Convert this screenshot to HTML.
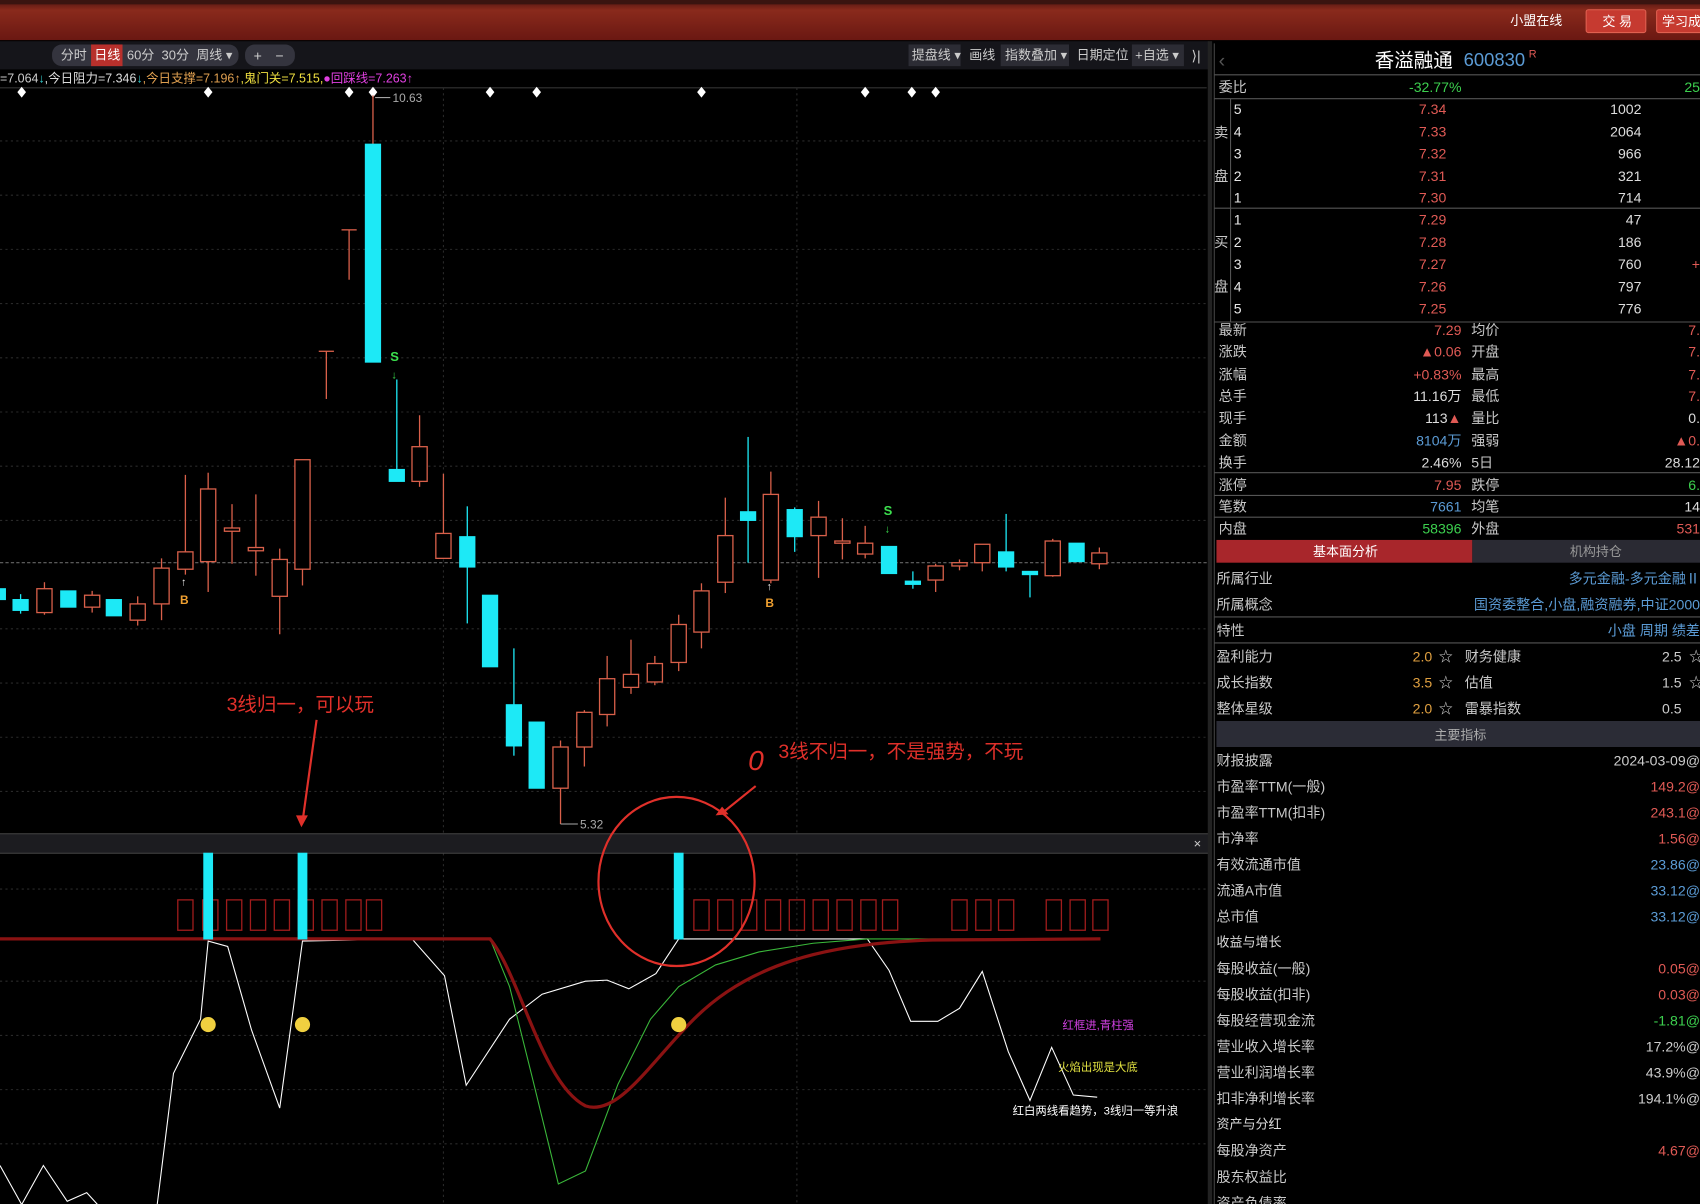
<!DOCTYPE html>
<html><head><meta charset="utf-8"><style>
html,body{margin:0;padding:0;background:#000;width:1700px;height:1204px;overflow:hidden}
svg{display:block}
text{font-family:"Liberation Sans","Noto Sans CJK SC",sans-serif}
.r{stroke:#d9604a;fill:#000;stroke-width:1.2}
.rw{stroke:#d9604a;stroke-width:1.2}
.c{fill:#1de9f6;stroke:#1de9f6;stroke-width:1}
.cw{stroke:#1de9f6;stroke-width:1.2}
.lb{fill:#c8c8c8;font-size:13px}
.rd{fill:#e05a55}.gr{fill:#3ccf4e}.bl{fill:#5b9bd5}.wh{fill:#e8e8e8}.or{fill:#e0a040}
.tofu{fill:none;stroke:#a01c1c;stroke-width:1.2}
</style></head><body>
<svg width="1700" height="1204" viewBox="0 0 1568 1110.5" preserveAspectRatio="none">
<defs><linearGradient id="hd" x1="0" y1="0" x2="0" y2="1"><stop offset="0" stop-color="#4a1410"/><stop offset="0.25" stop-color="#8a2a1c"/><stop offset="1" stop-color="#6a1812"/></linearGradient></defs>
<!-- header -->
<rect x="0" y="0" width="1568" height="37" fill="url(#hd)"/>
<rect x="0" y="0" width="1568" height="4" fill="#3a1410"/>
<text x="1393" y="23" font-size="12" fill="#fff">小盟在线</text>
<rect x="1463" y="9" width="55" height="21" rx="2" fill="#c63a30" stroke="#e06050"/>
<text x="1478" y="24" font-size="12" fill="#fff">交 易</text>
<rect x="1528" y="9" width="45" height="21" rx="2" fill="#c63a30" stroke="#e06050"/>
<text x="1533" y="24" font-size="12" fill="#fff">学习成</text>
<!-- toolbar -->
<rect x="0" y="38" width="1115" height="26" fill="#15151a"/>
<rect x="48" y="41" width="172" height="20" rx="9" fill="#34343e"/>
<rect x="84" y="41" width="29" height="20" fill="#b8302c"/>
<text x="56" y="55" font-size="12" fill="#ccc">分时</text><text x="87" y="55" font-size="12" fill="#fff">日线</text>
<text x="117" y="55" font-size="12" fill="#ccc">60分</text><text x="149" y="55" font-size="12" fill="#ccc">30分</text><text x="181" y="55" font-size="12" fill="#ccc">周线 ▾</text>
<rect x="226" y="41" width="46" height="20" rx="9" fill="#34343e"/>
<text x="234" y="56" font-size="13" fill="#ccc">+</text><text x="254" y="56" font-size="13" fill="#ccc">−</text>
<rect x="838" y="41" width="48" height="20" fill="#2c2c34"/><text x="841" y="55" font-size="12" fill="#ccc">提盘线 ▾</text>
<text x="894" y="55" font-size="12" fill="#ccc">画线</text>
<rect x="923" y="41" width="63" height="20" fill="#2c2c34"/><text x="927" y="55" font-size="12" fill="#ccc">指数叠加 ▾</text>
<text x="993" y="55" font-size="12" fill="#ccc">日期定位</text>
<rect x="1044" y="41" width="48" height="20" fill="#2c2c34"/><text x="1047" y="55" font-size="12" fill="#ccc">+自选 ▾</text>
<text x="1099" y="56" font-size="13" fill="#ccc">⟩|</text>
<!-- info line -->
<text x="0" y="76" font-size="11.5"><tspan fill="#ccc">=7.064</tspan><tspan fill="#3cc">↓</tspan><tspan fill="#ddd">,今日阻力=7.346</tspan><tspan fill="#3cc">↓</tspan><tspan fill="#e0a050">,今日支撑=7.196↑</tspan><tspan fill="#f0e040">,鬼门关=7.515,</tspan><tspan fill="#e040e0">●回踩线=7.263↑</tspan></text>
<line x1="0" y1="81" x2="1113" y2="81" stroke="#333"/>
<!-- grid -->
<g stroke="#2a2a2a" stroke-dasharray="2,3">
<line x1="0" y1="130" x2="1113" y2="130"/><line x1="0" y1="180" x2="1113" y2="180"/><line x1="0" y1="230" x2="1113" y2="230"/><line x1="0" y1="280" x2="1113" y2="280"/><line x1="0" y1="330" x2="1113" y2="330"/><line x1="0" y1="380" x2="1113" y2="380"/><line x1="0" y1="430" x2="1113" y2="430"/><line x1="0" y1="480" x2="1113" y2="480"/><line x1="0" y1="580" x2="1113" y2="580"/><line x1="0" y1="630" x2="1113" y2="630"/><line x1="0" y1="680" x2="1113" y2="680"/><line x1="0" y1="730" x2="1113" y2="730"/>
<line x1="409" y1="81" x2="409" y2="768"/><line x1="735" y1="81" x2="735" y2="768"/>
<line x1="0" y1="820" x2="1113" y2="820"/><line x1="0" y1="905" x2="1113" y2="905"/><line x1="0" y1="955" x2="1113" y2="955"/><line x1="0" y1="1005" x2="1113" y2="1005"/><line x1="0" y1="1055" x2="1113" y2="1055"/>
<line x1="409" y1="787" x2="409" y2="1110"/><line x1="735" y1="787" x2="735" y2="1110"/>
</g>
<line x1="0" y1="519" x2="1113" y2="519" stroke="#666" stroke-dasharray="3,2"/>
<!-- diamonds -->
<g fill="#fff">
<path d="M20 80l4 5-4 5-4-5z"/><path d="M192 80l4 5-4 5-4-5z"/><path d="M322 80l4 5-4 5-4-5z"/><path d="M344 80l4 5-4 5-4-5z"/><path d="M452 80l4 5-4 5-4-5z"/><path d="M495 80l4 5-4 5-4-5z"/><path d="M647 80l4 5-4 5-4-5z"/><path d="M798 80l4 5-4 5-4-5z"/><path d="M841 80l4 5-4 5-4-5z"/><path d="M863 80l4 5-4 5-4-5z"/>
</g>
<!-- candles -->
<rect class="c" x="-5" y="543" width="10" height="10"/>
<line class="cw" x1="19" y1="548" x2="19" y2="566"/><rect class="c" x="12" y="553" width="14" height="10"/>
<line class="rw" x1="41" y1="537" x2="41" y2="567"/><rect class="r" x="34" y="543" width="14" height="22"/>
<rect class="c" x="56" y="545" width="14" height="15"/>
<line class="rw" x1="85" y1="545" x2="85" y2="565"/><rect class="r" x="78" y="549" width="14" height="11"/>
<rect class="c" x="98" y="553" width="14" height="15"/>
<line class="rw" x1="127" y1="550" x2="127" y2="577"/><rect class="r" x="120" y="557" width="14" height="15"/>
<line class="rw" x1="149" y1="515" x2="149" y2="572"/><rect class="r" x="142" y="524" width="14" height="33"/>
<line class="rw" x1="171" y1="438" x2="171" y2="530"/><rect class="r" x="164" y="509" width="14" height="16"/>
<line class="rw" x1="192" y1="436" x2="192" y2="546"/><rect class="r" x="185" y="451" width="14" height="67"/>
<line class="rw" x1="214" y1="465" x2="214" y2="520"/><rect class="r" x="207" y="487" width="14" height="3"/>
<line class="rw" x1="236" y1="456" x2="236" y2="531"/><rect class="r" x="229" y="505" width="14" height="3"/>
<line class="rw" x1="258" y1="506" x2="258" y2="585"/><rect class="r" x="251" y="516" width="14" height="34"/>
<line class="rw" x1="279" y1="424" x2="279" y2="540"/><rect class="r" x="272" y="424" width="14" height="101"/>
<line class="rw" x1="301" y1="324" x2="301" y2="368"/><line class="rw" x1="294" y1="324" x2="308" y2="324"/>
<line class="rw" x1="322" y1="212" x2="322" y2="258"/><line class="rw" x1="315" y1="212" x2="329" y2="212"/>
<line class="rw" x1="344" y1="88" x2="344" y2="133"/><rect class="c" x="337" y="133" width="14" height="201"/>
<line class="cw" x1="366" y1="350" x2="366" y2="444"/><rect class="c" x="359" y="433" width="14" height="11"/>
<line class="rw" x1="387" y1="383" x2="387" y2="449"/><rect class="r" x="380" y="412" width="14" height="32"/>
<line class="rw" x1="409" y1="437" x2="409" y2="515"/><rect class="r" x="402" y="492" width="14" height="23"/>
<line class="cw" x1="431" y1="467" x2="431" y2="575"/><rect class="c" x="424" y="495" width="14" height="28"/>
<rect class="c" x="445" y="549" width="14" height="66"/>
<line class="cw" x1="474" y1="598" x2="474" y2="697"/><rect class="c" x="467" y="650" width="14" height="38"/>
<rect class="c" x="488" y="666" width="14" height="61"/>
<line class="rw" x1="517" y1="683" x2="517" y2="760"/><rect class="r" x="510" y="689" width="14" height="38"/>
<line class="rw" x1="539" y1="655" x2="539" y2="707"/><rect class="r" x="532" y="657" width="14" height="32"/>
<line class="rw" x1="560" y1="605" x2="560" y2="670"/><rect class="r" x="553" y="626" width="14" height="33"/>
<line class="rw" x1="582" y1="590" x2="582" y2="640"/><rect class="r" x="575" y="622" width="14" height="12"/>
<line class="rw" x1="604" y1="605" x2="604" y2="632"/><rect class="r" x="597" y="612" width="14" height="17"/>
<line class="rw" x1="626" y1="567" x2="626" y2="619"/><rect class="r" x="619" y="576" width="14" height="35"/>
<line class="rw" x1="647" y1="538" x2="647" y2="598"/><rect class="r" x="640" y="545" width="14" height="38"/>
<line class="rw" x1="669" y1="459" x2="669" y2="547"/><rect class="r" x="662" y="494" width="14" height="43"/>
<line class="cw" x1="690" y1="403" x2="690" y2="519"/><rect class="c" x="683" y="472" width="14" height="8"/>
<line class="rw" x1="711" y1="435" x2="711" y2="538"/><rect class="r" x="704" y="456" width="14" height="79"/>
<line class="cw" x1="733" y1="468" x2="733" y2="509"/><rect class="c" x="726" y="470" width="14" height="25"/>
<line class="rw" x1="755" y1="462" x2="755" y2="533"/><rect class="r" x="748" y="477" width="14" height="17"/>
<line class="rw" x1="777" y1="478" x2="777" y2="516"/><rect class="r" x="770" y="499" width="14" height="2"/>
<line class="rw" x1="798" y1="485" x2="798" y2="515"/><rect class="r" x="791" y="501" width="14" height="10"/>
<rect class="c" x="813" y="504" width="14" height="25"/>
<line class="cw" x1="842" y1="527" x2="842" y2="543"/><rect class="c" x="835" y="536" width="14" height="3"/>
<line class="rw" x1="863" y1="520" x2="863" y2="546"/><rect class="r" x="856" y="522" width="14" height="13"/>
<line class="rw" x1="885" y1="516" x2="885" y2="526"/><rect class="r" x="878" y="519" width="14" height="3"/>
<line class="rw" x1="906" y1="502" x2="906" y2="527"/><rect class="r" x="899" y="502" width="14" height="17"/>
<line class="cw" x1="928" y1="474" x2="928" y2="527"/><rect class="c" x="921" y="509" width="14" height="14"/>
<line class="cw" x1="950" y1="527" x2="950" y2="551"/><rect class="c" x="943" y="527" width="14" height="3"/>
<line class="rw" x1="971" y1="497" x2="971" y2="532"/><rect class="r" x="964" y="499" width="14" height="32"/>
<rect class="c" x="986" y="501" width="14" height="17"/>
<line class="rw" x1="1014" y1="505" x2="1014" y2="525"/><rect class="r" x="1007" y="510" width="14" height="10"/>
<!-- markers -->
<text x="166" y="557" font-size="11" font-weight="bold" fill="#f0a030">B</text><text x="167" y="540" font-size="10" fill="#fff">↑</text>
<text x="706" y="560" font-size="11" font-weight="bold" fill="#f0a030">B</text><text x="707" y="544" font-size="10" fill="#fff">↑</text>
<text x="360" y="333" font-size="12" font-weight="bold" fill="#3ce04e">S</text><text x="361" y="349" font-size="10" fill="#3ce04e">↓</text>
<text x="815" y="475" font-size="12" font-weight="bold" fill="#3ce04e">S</text><text x="816" y="491" font-size="10" fill="#3ce04e">↓</text>
<line x1="346" y1="90" x2="360" y2="90" stroke="#aaa"/><text x="362" y="94" font-size="11" fill="#aaa">10.63</text>
<line x1="517" y1="760" x2="533" y2="760" stroke="#aaa"/><text x="535" y="764" font-size="11" fill="#aaa">5.32</text>
<!-- annotations -->
<text x="209" y="656" font-size="18" fill="#e0302a">3线归一，可以玩</text>
<path d="M292 664 L279 758" stroke="#e0302a" stroke-width="2"/><path d="M273 752 L278 763 L284 752z" fill="#e0302a"/>
<text x="690" y="710" font-size="26" fill="#e0302a" font-style="italic">0</text>
<text x="718" y="699" font-size="18" fill="#e0302a">3线不归一，不是强势，不玩</text>
<path d="M697 725 L666 750" stroke="#e0302a" stroke-width="2"/><path d="M660 752 L672 751 L666 744z" fill="#e0302a"/>
<!-- subpanel separator -->
<rect x="0" y="769" width="1115" height="18" fill="#1c1c20"/><line x1="0" y1="769" x2="1115" y2="769" stroke="#444"/><line x1="0" y1="787" x2="1115" y2="787" stroke="#444"/>
<text x="1101" y="782" font-size="12" fill="#ccc">×</text>
<!-- indicator -->
<g class="tofu">
<rect x="164" y="830" width="14" height="28"/><rect x="187" y="830" width="14" height="28"/><rect x="209" y="830" width="14" height="28"/><rect x="231" y="830" width="14" height="28"/><rect x="253" y="830" width="14" height="28"/><rect x="275" y="830" width="14" height="28"/><rect x="297" y="830" width="14" height="28"/><rect x="319" y="830" width="14" height="28"/><rect x="338" y="830" width="14" height="28"/>
<rect x="640" y="830" width="14" height="28"/><rect x="662" y="830" width="14" height="28"/><rect x="684" y="830" width="14" height="28"/><rect x="706" y="830" width="14" height="28"/><rect x="728" y="830" width="14" height="28"/><rect x="750" y="830" width="14" height="28"/><rect x="772" y="830" width="14" height="28"/><rect x="794" y="830" width="14" height="28"/><rect x="814" y="830" width="14" height="28"/>
<rect x="878" y="830" width="14" height="28"/><rect x="900" y="830" width="14" height="28"/><rect x="921" y="830" width="14" height="28"/>
<rect x="965" y="830" width="14" height="28"/><rect x="987" y="830" width="14" height="28"/><rect x="1008" y="830" width="14" height="28"/>
</g>
<polyline fill="none" stroke="#fff" stroke-width="1" points="0,1075 20,1111 40,1075 62,1108 80,1100 90,1111"/>
<polyline fill="none" stroke="#fff" stroke-width="1" points="145,1111 160,990 185,940 192,868 210,873 232,950 258,1022 279,868 380,866 410,900 430,1001 470,940 500,917 540,905 560,904 580,912 605,898 626,866 800,866 820,895 840,942 865,942 885,930 906,896 930,970 950,1015 970,966 990,1010 1012,1012"/>
<polyline fill="none" stroke="#3ab83a" stroke-width="1" points="452,866 470,910 490,990 515,1092 540,1080 570,1000 600,940 626,910 660,890 700,878 750,870 800,866 1015,866"/>
<path d="M0 866 L452 866 C480 900 500 1000 540 1020 C570 1030 600 980 640 940 C690 890 760 870 860 867 L1015 866" fill="none" stroke="#8a1212" stroke-width="3"/>
<rect class="c" x="188" y="787" width="8" height="79"/><rect class="c" x="275" y="787" width="8" height="79"/><rect class="c" x="622" y="787" width="8" height="79"/>
<g fill="#f0d040"><circle cx="192" cy="945" r="7"/><circle cx="279" cy="945" r="7"/><circle cx="626" cy="945" r="7"/></g>
<ellipse cx="624" cy="813" rx="72" ry="78" fill="none" stroke="#e0302a" stroke-width="2"/>
<text x="980" y="949" font-size="10.5" fill="#d040e0">红框进,青柱强</text>
<text x="976" y="988" font-size="10.5" fill="#e0e040">火焰出现是大底</text>
<text x="934" y="1028" font-size="10.5" fill="#fff">红白两线看趋势，3线归一等升浪</text>
<!-- right panel -->
<rect x="1114" y="38" width="4" height="1073" fill="#222"/>
<line x1="1120" y1="40" x2="1120" y2="1111" stroke="#444"/>
<text x="1124" y="62" font-size="18" fill="#555">‹</text>
<text x="1268" y="62" font-size="18" fill="#fff">香溢融通</text><text x="1350" y="61" font-size="17" class="bl">600830</text><text x="1410" y="53" font-size="10" class="rd">R</text>
<line x1="1120" y1="69" x2="1568" y2="69" stroke="#555"/>
<text x="1124" y="85" class="lb">委比</text><text x="1348" y="85" font-size="13" class="gr" text-anchor="end">-32.77%</text><text x="1568" y="85" font-size="13" class="gr" text-anchor="end">25</text>
<line x1="1120" y1="91" x2="1568" y2="91" stroke="#555"/>
<line x1="1135" y1="91" x2="1135" y2="297" stroke="#555"/>
<g font-size="13">
<text x="1120" y="127" class="lb">卖</text><text x="1120" y="167" class="lb">盘</text>
<text x="1120" y="228" class="lb">买</text><text x="1120" y="269" class="lb">盘</text>
<g class="wh" fill="#ddd"><text x="1138" y="105">5</text><text x="1138" y="126">4</text><text x="1138" y="146">3</text><text x="1138" y="167">2</text><text x="1138" y="187">1</text><text x="1138" y="207">1</text><text x="1138" y="228">2</text><text x="1138" y="248">3</text><text x="1138" y="269">4</text><text x="1138" y="289">5</text></g>
<g class="rd" text-anchor="end"><text x="1334" y="105">7.34</text><text x="1334" y="126">7.33</text><text x="1334" y="146">7.32</text><text x="1334" y="167">7.31</text><text x="1334" y="187">7.30</text><text x="1334" y="207">7.29</text><text x="1334" y="228">7.28</text><text x="1334" y="248">7.27</text><text x="1334" y="269">7.26</text><text x="1334" y="289">7.25</text></g>
<g fill="#ddd" text-anchor="end"><text x="1514" y="105">1002</text><text x="1514" y="126">2064</text><text x="1514" y="146">966</text><text x="1514" y="167">321</text><text x="1514" y="187">714</text><text x="1514" y="207">47</text><text x="1514" y="228">186</text><text x="1514" y="248">760</text><text x="1514" y="269">797</text><text x="1514" y="289">776</text></g>
<text x="1568" y="248" class="rd" text-anchor="end">+</text>
</g>
<line x1="1120" y1="192" x2="1568" y2="192" stroke="#555"/>
<line x1="1120" y1="297" x2="1568" y2="297" stroke="#555"/>
<g font-size="13">
<g class="lb"><text x="1124" y="309">最新</text><text x="1124" y="329">涨跌</text><text x="1124" y="350">涨幅</text><text x="1124" y="370">总手</text><text x="1124" y="390">现手</text><text x="1124" y="411">金额</text><text x="1124" y="431">换手</text><text x="1124" y="452">涨停</text><text x="1124" y="472">笔数</text><text x="1124" y="492">内盘</text>
<text x="1357" y="309">均价</text><text x="1357" y="329">开盘</text><text x="1357" y="350">最高</text><text x="1357" y="370">最低</text><text x="1357" y="390">量比</text><text x="1357" y="411">强弱</text><text x="1357" y="431">5日</text><text x="1357" y="452">跌停</text><text x="1357" y="472">均笔</text><text x="1357" y="492">外盘</text></g>
<g text-anchor="end"><text x="1348" y="309" class="rd">7.29</text><text x="1348" y="329" class="rd">▲0.06</text><text x="1348" y="350" class="rd">+0.83%</text><text x="1348" y="370" fill="#ddd">11.16万</text><text x="1348" y="390" fill="#ddd">113<tspan class="rd">▲</tspan></text><text x="1348" y="411" class="bl">8104万</text><text x="1348" y="431" fill="#ddd">2.46%</text><text x="1348" y="452" class="rd">7.95</text><text x="1348" y="472" class="bl">7661</text><text x="1348" y="492" class="gr">58396</text>
<text x="1568" y="309" class="rd">7.</text><text x="1568" y="329" class="rd">7.</text><text x="1568" y="350" class="rd">7.</text><text x="1568" y="370" class="rd">7.</text><text x="1568" y="390" fill="#ddd">0.</text><text x="1568" y="411" class="rd">▲0.</text><text x="1568" y="431" fill="#ddd">28.12</text><text x="1568" y="452" class="gr">6.</text><text x="1568" y="472" fill="#ddd">14</text><text x="1568" y="492" class="rd">531</text></g>
</g>
<line x1="1120" y1="436" x2="1568" y2="436" stroke="#555"/><line x1="1120" y1="457" x2="1568" y2="457" stroke="#555"/><line x1="1120" y1="477" x2="1568" y2="477" stroke="#555"/>
<rect x="1122" y="498" width="236" height="21" fill="#a8262b"/><rect x="1358" y="498" width="210" height="21" fill="#2a2a33"/>
<text x="1211" y="513" font-size="12" fill="#fff">基本面分析</text><text x="1448" y="513" font-size="12" fill="#999">机构持仓</text>
<g font-size="13">
<g class="lb"><text x="1122" y="538">所属行业</text><text x="1122" y="562">所属概念</text><text x="1122" y="586">特性</text><text x="1122" y="610">盈利能力</text><text x="1122" y="634">成长指数</text><text x="1122" y="658">整体星级</text>
<text x="1464" y="610">财务健康</text></g>
<text x="1465" y="610" class="lb" display="none"></text>
<text x="1351" y="610" class="lb">财务健康</text><text x="1351" y="634" class="lb">估值</text><text x="1351" y="658" class="lb">雷暴指数</text>
<g text-anchor="end" class="bl"><text x="1568" y="538">多元金融-多元金融Ⅱ</text><text x="1568" y="562">国资委整合,小盘,融资融券,中证2000</text><text x="1568" y="586">小盘 周期 绩差</text></g>
<g class="or" text-anchor="end"><text x="1321" y="610">2.0</text><text x="1321" y="634">3.5</text><text x="1321" y="658">2.0</text></g>
<g fill="#ccc"><text x="1327" y="610">☆</text><text x="1327" y="634">☆</text><text x="1327" y="658">☆</text><text x="1558" y="610">☆</text><text x="1558" y="634">☆</text></g>
<g fill="#ccc" text-anchor="end"><text x="1551" y="610">2.5</text><text x="1551" y="634">1.5</text><text x="1551" y="658">0.5</text></g>
</g>
<rect x="1464" y="598" width="60" height="16" fill="#000"/>
<line x1="1120" y1="569" x2="1568" y2="569" stroke="#555"/><line x1="1120" y1="593" x2="1568" y2="593" stroke="#555"/>
<rect x="1122" y="665" width="446" height="24" fill="#2b2c36"/>
<text x="1323" y="682" font-size="12" fill="#aaa">主要指标</text>
<g font-size="13" class="lb">
<text x="1122" y="706">财报披露</text><text x="1122" y="730">市盈率TTM(一般)</text><text x="1122" y="754">市盈率TTM(扣非)</text><text x="1122" y="778">市净率</text><text x="1122" y="802">有效流通市值</text><text x="1122" y="826">流通A市值</text><text x="1122" y="850">总市值</text><text x="1122" y="873" font-size="12" fill="#ddd">收益与增长</text><text x="1122" y="898">每股收益(一般)</text><text x="1122" y="922">每股收益(扣非)</text><text x="1122" y="946">每股经营现金流</text><text x="1122" y="970">营业收入增长率</text><text x="1122" y="994">营业利润增长率</text><text x="1122" y="1018">扣非净利增长率</text><text x="1122" y="1041" font-size="12" fill="#ddd">资产与分红</text><text x="1122" y="1066">每股净资产</text><text x="1122" y="1090">股东权益比</text><text x="1122" y="1114">资产负债率</text>
</g>
<g font-size="13" text-anchor="end">
<text x="1568" y="706" fill="#ccc">2024-03-09@</text><text x="1568" y="730" class="rd">149.2@</text><text x="1568" y="754" class="rd">243.1@</text><text x="1568" y="778" class="rd">1.56@</text><text x="1568" y="802" class="bl">23.86@</text><text x="1568" y="826" class="bl">33.12@</text><text x="1568" y="850" class="bl">33.12@</text><text x="1568" y="898" class="rd">0.05@</text><text x="1568" y="922" class="rd">0.03@</text><text x="1568" y="946" class="gr">-1.81@</text><text x="1568" y="970" fill="#ccc">17.2%@</text><text x="1568" y="994" fill="#ccc">43.9%@</text><text x="1568" y="1018" fill="#ccc">194.1%@</text><text x="1568" y="1066" class="rd">4.67@</text>
</g>
</svg>
</body></html>
